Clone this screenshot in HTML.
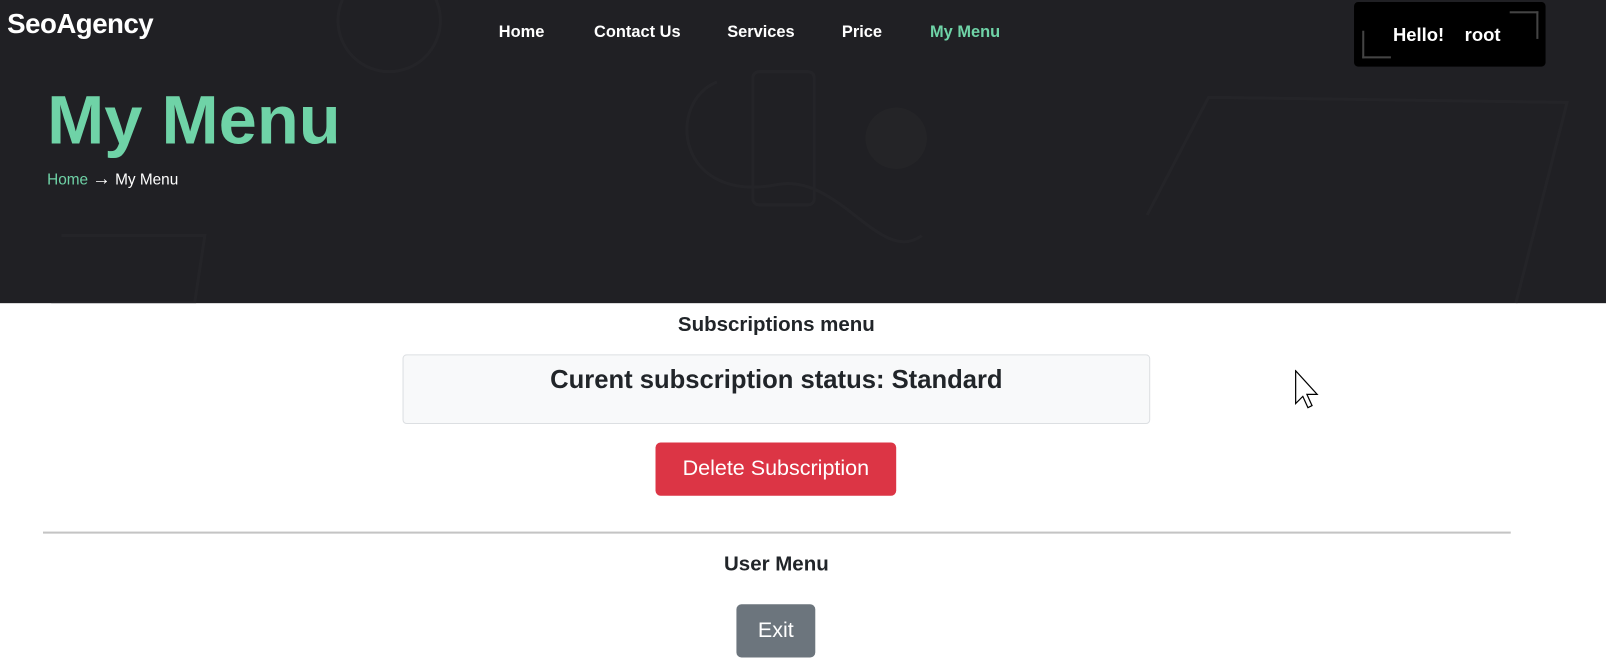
<!DOCTYPE html>
<html><head><style>
*{margin:0;padding:0;box-sizing:border-box}
body{width:1606px;height:668px;background:#fff;font-family:"Liberation Sans",sans-serif;position:relative;overflow:hidden}
#w{position:absolute;left:0;top:0;width:1568px;height:652px;transform:scale(1.02423);transform-origin:0 0}
.hero{position:absolute;left:0;top:0;width:1568px;height:296px;background:#202024}
.abs{position:absolute;white-space:nowrap}
.nav{color:#fff;font-size:16px;font-weight:bold;top:23px}
</style></head><body>
<div id="w">
<div class="hero">
<svg width="1568" height="296" style="position:absolute;left:0;top:0" fill="none" stroke="#242428" stroke-width="3">
<circle cx="875" cy="135" r="30" fill="#242427" stroke="none"/>
<path d="M1120 210 L1180 95 L1530 100 L1480 296"/>
<path d="M700 80 C650 100 660 200 760 180 C820 170 860 260 900 230"/>
<rect x="735" y="70" width="60" height="130" rx="6"/>
<path d="M60 230 L200 230 L190 296 L50 296"/>
<circle cx="380" cy="20" r="50"/>
</svg>
<div class="abs" style="left:7px;top:8px;color:#fff;font-size:27px;font-weight:bold;letter-spacing:-0.5px">SeoAgency</div>
<div class="abs nav" style="left:487px">Home</div>
<div class="abs nav" style="left:580px">Contact Us</div>
<div class="abs nav" style="left:710px">Services</div>
<div class="abs nav" style="left:822px">Price</div>
<div class="abs nav" style="left:908px;color:#6fd3a7">My Menu</div>
<div class="abs" style="left:1322px;top:2px;width:187px;height:63px;background:#000;border-radius:4px">
<div class="abs" style="left:8px;top:28px;width:28px;height:27px;border-left:2px solid #444;border-bottom:2px solid #444"></div>
<div class="abs" style="left:152px;top:9px;width:28px;height:27px;border-right:2px solid #444;border-top:2px solid #444"></div>
<div class="abs" style="left:38px;top:22px;color:#fff;font-size:18px;font-weight:bold">Hello!&nbsp;&nbsp;&nbsp;&nbsp;root</div>
</div>
<div class="abs" style="left:46px;top:79px;color:#6fd3a7;font-size:67px;font-weight:bold">My Menu</div>
<div class="abs" style="left:46px;top:164px;font-size:15px;color:#fff"><span style="color:#6fd3a7">Home</span> <span style="font-size:18px">→</span> My Menu</div>
</div>
<div class="abs" style="left:0;width:1516px;text-align:center;top:306px;font-size:20px;font-weight:bold;color:#212529">Subscriptions menu</div>
<div class="abs" style="left:393px;top:346px;width:730px;height:68px;background:#f8f9fa;border:1px solid #dcdfe2;border-radius:4px;text-align:center;padding-top:10px;font-size:25px;font-weight:bold;color:#212529">Curent subscription status: Standard</div>
<div class="abs" style="left:640px;top:432px;width:235px;height:52px;background:#dc3545;border-radius:5px;color:#fff;font-size:21px;text-align:center;line-height:52px">Delete Subscription</div>
<div class="abs" style="left:42px;top:519px;width:1433px;height:2px;background:#c4c4c4"></div>
<div class="abs" style="left:0;width:1516px;text-align:center;top:540px;font-size:20px;font-weight:bold;color:#212529">User Menu</div>
<div class="abs" style="left:719px;top:590px;width:77px;height:52px;background:#6c757d;border-radius:5px;color:#fff;font-size:21px;text-align:center;line-height:52px">Exit</div>
<svg class="abs" style="left:1264px;top:361px" width="26" height="40"><path d="M1 1 L1 33 L8 26 L13 37 L17 35 L12 24 L22 24 Z" fill="#fff" stroke="#000" stroke-width="1.2"/></svg>
</div>
</body></html>
